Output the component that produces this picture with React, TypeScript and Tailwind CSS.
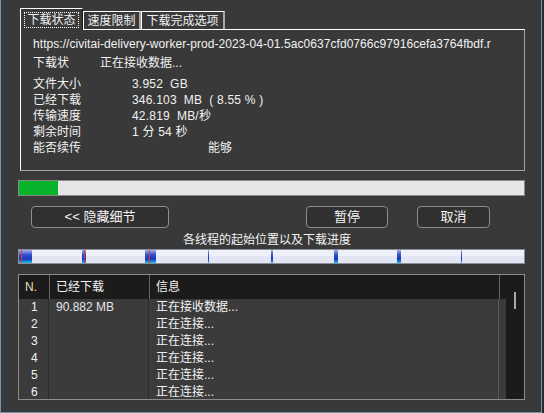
import React from 'react';

const FONT = "font-['Liberation_Sans','Noto_Sans_CJK_SC',sans-serif]";

interface Marker {
  x: number;
  w: number;
  red?: number;
}

// thread start positions on the bar, in px from the bar's left edge
const markers: Marker[] = [
  { x: 1, w: 13, red: 3 },
  { x: 64, w: 4, red: 66 },
  { x: 127, w: 11, red: 131 },
  { x: 190, w: 1 },
  { x: 253, w: 2 },
  { x: 316, w: 4 },
  { x: 379, w: 4 },
  { x: 443, w: 1 },
];

const rows = [
  { n: '1', done: '90.882 MB', info: '正在接收数据...' },
  { n: '2', done: '', info: '正在连接...' },
  { n: '3', done: '', info: '正在连接...' },
  { n: '4', done: '', info: '正在连接...' },
  { n: '5', done: '', info: '正在连接...' },
  { n: '6', done: '', info: '正在连接...' },
];

const stats = [
  { label: '文件大小', value: '3.952  GB' },
  { label: '已经下载', value: '346.103  MB  ( 8.55 % )' },
  { label: '传输速度', value: '42.819  MB/秒' },
  { label: '剩余时间', value: '1 分 54 秒' },
];

function ThreadBar() {
  return (
    <svg width="507" height="15" className="block">
      <defs>
        <linearGradient id="seg" x1="0" y1="0" x2="0" y2="1">
          <stop offset="0" stopColor="#a4acea" />
          <stop offset="0.35" stopColor="#3454d0" />
          <stop offset="0.7" stopColor="#1436b8" />
          <stop offset="1" stopColor="#1ec4ea" />
        </linearGradient>
      </defs>
      <rect x="0.5" y="0.5" width="506" height="14" fill="#e2e6f3" stroke="#8a8c98" />
      <rect x="1" y="1" width="505" height="6" fill="#eff1fa" />
      {markers.map((m, i) => (
        <g key={i}>
          <rect x={m.x} y="1" width={m.w} height="13" fill="url(#seg)" />
          {m.red !== undefined && <rect x={m.red} y="1" width="1" height="13" fill="#e8342c" />}
        </g>
      ))}
    </svg>
  );
}

export default function App() {
  return (
    <div className={`w-[544px] h-[413px] bg-[#2a2a2a] text-[12px] text-[#f2f2f2] ${FONT}`}>
      <div className="w-[542px] h-[413px] bg-[#393939] border-l border-r border-b border-[#7592ae] flex flex-col overflow-hidden">
        {/* tabs */}
        <div className="ml-[19px] mt-[8px] w-[505px]">
          <div className="flex items-end h-[21px]">
            <div className="relative z-10 -mb-px h-[22px] w-[63px] bg-[#393939] border-t border-l border-white border-r border-r-[#1a1a1a] flex items-center justify-center">
              <div className="border border-dotted border-white px-[2px] h-[16px] leading-[14px] mt-[1px]">下载状态</div>
            </div>
            <div className="h-[18px] w-[58px] border-t border-l border-white border-r-2 border-r-[#a8a8a8] flex items-center justify-center leading-[16px]">速度限制</div>
            <div className="h-[18px] w-[84px] border-t border-l border-white border-r-2 border-r-[#a8a8a8] flex items-center justify-center leading-[16px]">下载完成选项</div>
          </div>
          <div className="h-[142px] border border-t-white border-l-white border-r-[#a4a4a4] border-b-[#a4a4a4] pl-[12px] pt-[6px]">
            <div className="leading-[16px] whitespace-nowrap overflow-hidden w-[478px] tracking-[0.06px]">https://civitai-delivery-worker-prod-2023-04-01.5ac0637cfd0766c97916cefa3764fbdf.r</div>
            <div className="mt-[3px] flex leading-[16px]">
              <span className="w-[67px]">下载状</span>
              <span>正在接收数据...</span>
            </div>
            <div className="mt-[5px]">
              {stats.map((s) => (
                <div key={s.label} className="flex leading-[16px] whitespace-pre">
                  <span className="w-[99px]">{s.label}</span>
                  <span className="tracking-[0.2px]">{s.value}</span>
                </div>
              ))}
              <div className="flex leading-[16px]">
                <span className="w-[175px]">能否续传</span>
                <span>能够</span>
              </div>
            </div>
          </div>
        </div>

        {/* overall progress */}
        <div className="ml-[17px] mt-[9px] w-[507px] h-[16px] border border-[#8a8a8a] bg-[#e6e6e6]">
          <div className="w-[39px] h-full bg-[#06b32b]" />
        </div>

        {/* buttons */}
        <div className="flex mt-[10px] h-[22px] text-[13px]">
          <button className="ml-[30px] w-[138px] h-[22px] rounded-[4px] border border-[#8e8e8e] bg-[#303030] text-[#f4f4f4] leading-[20px]">&lt;&lt; 隐藏细节</button>
          <button className="ml-[137px] w-[82px] h-[22px] rounded-[4px] border border-[#8e8e8e] bg-[#303030] text-[#f4f4f4] leading-[20px]">暂停</button>
          <button className="ml-[29px] w-[73px] h-[22px] rounded-[4px] border border-[#8e8e8e] bg-[#303030] text-[#f4f4f4] leading-[20px]">取消</button>
        </div>

        <div className="ml-[182px] mt-[4px] h-[16px] leading-[16px]">各线程的起始位置以及下载进度</div>

        <div className="ml-[17px] mt-[1px]">
          <ThreadBar />
        </div>

        {/* thread list */}
        <div className="ml-[17px] mt-[10px] w-[507px] h-[126px] border border-[#8c8c8c] flex overflow-hidden">
          <div className="w-[487px] flex flex-col">
            <div className="h-[24px] bg-[#1b1b1b] flex items-center shrink-0">
              <div className="w-[31px] h-full border-r border-[#666] pl-[6px] leading-[24px] text-[#e8dfae]">N.</div>
              <div className="w-[100px] h-full border-r border-[#666] pl-[6px] leading-[24px]">已经下载</div>
              <div className="w-[350px] h-full border-r border-[#666] pl-[6px] leading-[24px]">信息</div>
            </div>
            <div className="flex-1 bg-[#3b3b3b] flex overflow-hidden">
              <div className="w-[30px] border-r border-[#2c2c2c]">
                {rows.map((r) => (
                  <div key={r.n} className="h-[17px] leading-[17px] pl-[12px]">{r.n}</div>
                ))}
              </div>
              <div className="w-[100px] border-r border-[#2c2c2c]">
                {rows.map((r) => (
                  <div key={r.n} className="h-[17px] leading-[17px] pl-[7px] text-[#e6e6e6]">{r.done}</div>
                ))}
              </div>
              <div className="w-[350px] border-r border-[#5a5a5a]">
                {rows.map((r) => (
                  <div key={r.n} className="h-[17px] leading-[17px] pl-[7px]">{r.info}</div>
                ))}
              </div>
            </div>
          </div>
          <div className="w-[18px] bg-[#1b1b1b] relative">
            <div className="absolute left-[8px] top-[17px] w-[2px] h-[17px] bg-[#a8a8a8]" />
          </div>
        </div>
      </div>
    </div>
  );
}
